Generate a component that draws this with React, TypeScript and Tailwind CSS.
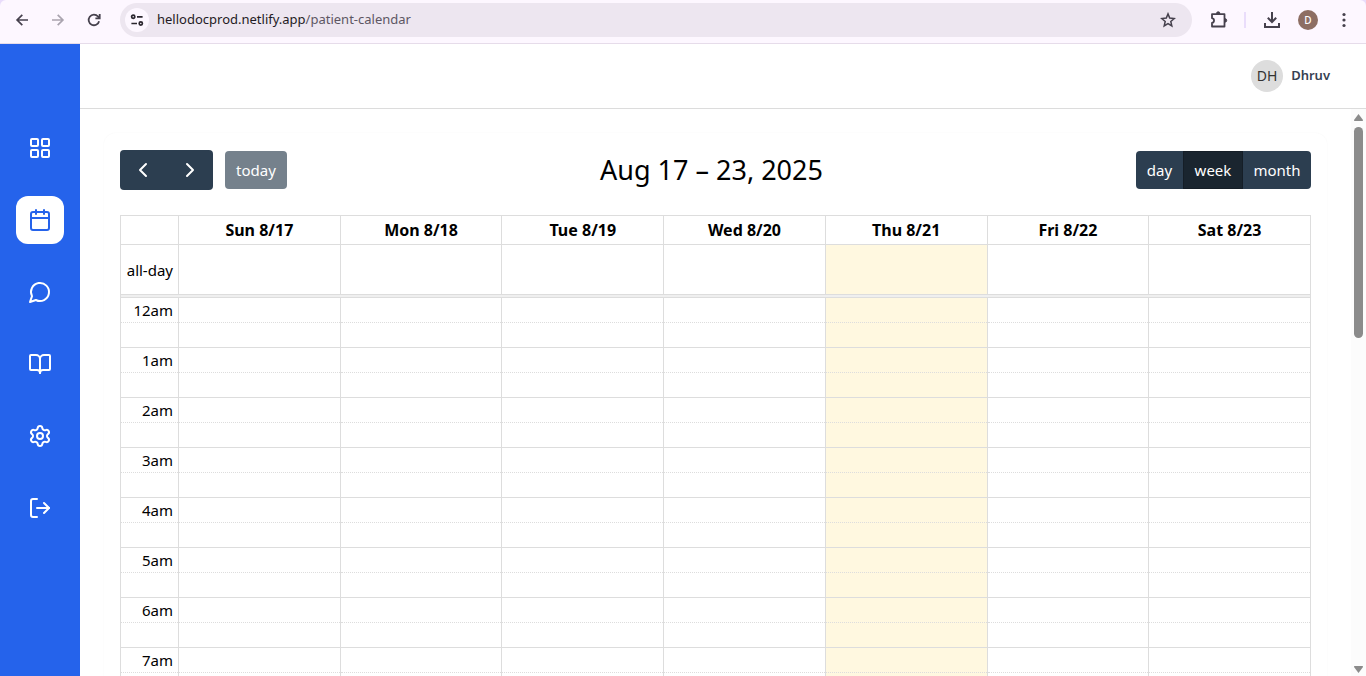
import { BookOpen, Calendar, ChevronLeft, ChevronRight, LayoutGrid, LogOut, Settings } from "lucide-react";
import type { ReactNode } from "react";

function MessageBubble() {
  return (
    <svg viewBox="0 0 24 24" className="size-6" fill="none" stroke="currentColor" strokeWidth="2" strokeLinecap="round" strokeLinejoin="round">
      <path d="M7.9 20A9 9 0 1 0 4 16.1L2 22Z" />
    </svg>
  );
}

const navItems: { label: string; icon: ReactNode; active?: boolean }[] = [
  { label: "Dashboard", icon: <LayoutGrid className="size-6" /> },
  { label: "Calendar", icon: <Calendar className="size-6" />, active: true },
  { label: "Messages", icon: <MessageBubble /> },
  { label: "Records", icon: <BookOpen className="size-6" /> },
  { label: "Settings", icon: <Settings className="size-6" /> },
  { label: "Log out", icon: <LogOut className="size-6" /> },
];

const days = ["Sun 8/17", "Mon 8/18", "Tue 8/19", "Wed 8/20", "Thu 8/21", "Fri 8/22", "Sat 8/23"];
const today = "Thu 8/21";
const hours = ["12am", "1am", "2am", "3am", "4am", "5am", "6am", "7am"];

function BrowserBar() {
  return (
    <div className="shrink-0 bg-[#e9dcfb]">
      <div className="flex h-11 items-start rounded-t-md border-b border-[#e6dcea] bg-[#fdf7ff] pt-[3px] text-[#46414d]">
        <div className="flex h-[34px] w-[120px] shrink-0 items-center gap-5 pl-3.5">
          <button aria-label="Back" className="size-4">
            <svg viewBox="0 0 16 16" className="size-4" fill="none" stroke="currentColor" strokeWidth="1.7">
              <path d="M14 8H3M8.3 2.8 3.1 8l5.2 5.2" />
            </svg>
          </button>
          <button aria-label="Forward" className="size-4 text-[#aaa4af]">
            <svg viewBox="0 0 16 16" className="size-4" fill="none" stroke="currentColor" strokeWidth="1.7">
              <path d="M2 8h11M7.7 2.8 12.9 8l-5.2 5.2" />
            </svg>
          </button>
          <button aria-label="Reload" className="size-4">
            <svg viewBox="0 0 16 16" className="size-4" fill="none" stroke="currentColor" strokeWidth="1.8">
              <path d="M13.1 9.2A5.3 5.3 0 1 1 12 4.5l1.4 1.4M13.7 2v4.3H9.4" />
            </svg>
          </button>
        </div>
        <div className="flex h-[34px] flex-1 items-center rounded-full bg-[#ede6f0] pr-4 pl-[5px]">
          <button aria-label="Site information" className="flex size-6 items-center justify-center rounded-full bg-[#fdf7ff]">
            <svg viewBox="0 0 14 14" className="size-3.5" fill="none" stroke="#2a262e" strokeWidth="1.7">
              <circle cx="3.2" cy="3.8" r="1.6" />
              <path d="M7 3.8h5.600M1.400 10.500H7" />
              <circle cx="10.800" cy="10.500" r="1.600" />
            </svg>
          </button>
          <p className="ml-2 flex-1 text-[13px] text-[#1f1b24]">
            hellodocprod.netlify.app<span className="text-[#5d5663]">/patient-calendar</span>
          </p>
          <button aria-label="Bookmark this page">
            <svg viewBox="0 0 16 16" className="size-4" fill="none" stroke="currentColor" strokeWidth="1.5">
              <path d="m8 1.900 1.700 4.200 4.500.4-3.400 3 1 4.400L8 11.600l-3.800 2.300 1-4.400-3.400-3 4.500-.4Z" />
            </svg>
          </button>
        </div>
        <div className="flex h-[34px] w-[174px] shrink-0 items-center pl-[18px]">
          <button aria-label="Extensions">
            <svg viewBox="0 0 18 18" className="size-[18px]" fill="none" stroke="currentColor" strokeWidth="1.8" strokeLinejoin="round">
              <path d="M2 3.200h12.500v12.300H2v-3.500c2.700-.5 2.700-4.300 0-4.800Z" />
              <path d="M6.500 2.500a1.700 1.700 0 0 1 3.400 0ZM15 7.700a1.700 1.700 0 0 1 0 3.400Z" fill="currentColor" strokeWidth="1" />
            </svg>
          </button>
          <span className="ml-4 h-4 w-0.5 bg-[#eaddfb]" />
          <button aria-label="Downloads" className="ml-[17px]">
            <svg viewBox="0 0 18 18" className="size-[18px]" fill="none" stroke="currentColor" strokeWidth="2">
              <path d="M9 1v9.500M4.800 6.800 9 11l4.200-4.200M2 12v4h14v-4" />
            </svg>
          </button>
          <button aria-label="Profile" className="ml-[17px] flex size-5 items-center justify-center rounded-full bg-[#8d6e63] text-[10px] font-medium text-white">
            D
          </button>
          <button aria-label="Menu" className="ml-[17px]">
            <svg viewBox="0 0 18 18" className="size-[18px]" fill="currentColor">
              <circle cx="9" cy="3.500" r="1.600" />
              <circle cx="9" cy="9" r="1.600" />
              <circle cx="9" cy="14.500" r="1.600" />
            </svg>
          </button>
        </div>
      </div>
    </div>
  );
}

function Sidebar() {
  return (
    <nav className="flex w-20 shrink-0 flex-col items-center gap-6 bg-[#2563eb] pt-20">
      {navItems.map((item) => (
        <a
          key={item.label}
          href="#"
          aria-label={item.label}
          className={
            item.active
              ? "flex size-12 items-center justify-center rounded-xl bg-white text-[#2563eb]"
              : "flex size-12 items-center justify-center rounded-xl text-white"
          }
        >
          {item.icon}
        </a>
      ))}
    </nav>
  );
}

function Toolbar() {
  return (
    <div className="mb-6 flex h-[42px] items-center justify-between text-[15px] text-white">
      <div className="flex items-center gap-3">
        <div className="flex h-10 overflow-hidden rounded bg-[#2c3e50]">
          <button aria-label="Previous week" className="flex w-[46px] items-center justify-center">
            <ChevronLeft className="size-6" />
          </button>
          <button aria-label="Next week" className="flex w-[47px] items-center justify-center">
            <ChevronRight className="size-6" />
          </button>
        </div>
        <button disabled className="h-[38px] w-[62px] rounded bg-[#2c3e50] opacity-65">
          today
        </button>
      </div>
      <h2 className="text-[27px] text-black">Aug 17 – 23, 2025</h2>
      <div className="flex h-[38px] overflow-hidden rounded bg-[#2c3e50]">
        <button className="w-[47px]">day</button>
        <button className="w-[60px] border border-[#151e27] bg-[#1a252f]">week</button>
        <button className="w-[68px]">month</button>
      </div>
    </div>
  );
}

function SlotCells({ border }: { border: string }) {
  return (
    <>
      {days.map((d) => (
        <td key={d} className={d === today ? `bg-[#fff8e0] ${border}` : border} />
      ))}
    </>
  );
}

function WeekTable() {
  const solid = "border border-[#dddddd] p-0";
  const dotted = "border border-[#dddddd] [border-top-style:dotted] p-0";
  return (
    <table className="w-full table-fixed border-collapse text-[15px] leading-5 text-black">
      <colgroup>
        <col className="w-[58px]" />
        {days.map((d) => (
          <col key={d} />
        ))}
      </colgroup>
      <thead>
        <tr className="h-[29px]">
          <td className={solid} />
          {days.map((d) => (
            <th key={d} scope="col" className={`text-base leading-5 font-bold ${solid}`}>
              {d}
            </th>
          ))}
        </tr>
      </thead>
      <tbody>
        <tr className="h-[50px]">
          <th scope="row" className={`text-right font-normal whitespace-nowrap ${solid}`}>
            <span className="pr-[5px]">all-day</span>
          </th>
          <SlotCells border={solid} />
        </tr>
        <tr className="h-[3px]">
          <td colSpan={8} className="border border-[#dddddd] bg-[#efefef] p-0" />
        </tr>
      </tbody>
      {hours.map((h) => (
        <tbody key={h}>
          <tr className="h-[25px]">
            <th scope="row" className="border border-[#dddddd] [border-bottom-style:dotted] p-0 text-right font-normal">
              <span className="pr-[5px]">{h}</span>
            </th>
            <SlotCells border="border border-[#dddddd] [border-bottom-style:dotted] p-0" />
          </tr>
          <tr className="h-[25px]">
            <td className={dotted} />
            <SlotCells border={dotted} />
          </tr>
        </tbody>
      ))}
    </table>
  );
}

function ScrollRail() {
  return (
    <div aria-hidden="true" className="flex w-[15px] shrink-0 flex-col items-center bg-[#fcfcfc] text-[#8b8b8b]">
      <svg viewBox="0 0 15 18" className="h-[18px] w-[15px] shrink-0" fill="currentColor">
        <path d="M7.500 5 12 11q.3 1-.8 1H3.800q-1.100 0-.8-1Z" />
      </svg>
      <div className="h-[211px] w-[9px] rounded-full bg-[#8b8b8b]" />
      <div className="flex-1" />
      <svg viewBox="0 0 15 14" className="h-3.5 w-[15px] shrink-0" fill="currentColor">
        <path d="M7.500 11 12 5q.3-1-.8-1H3.800q-1.100 0-.8 1Z" />
      </svg>
    </div>
  );
}

export default function App() {
  return (
    <div className="flex h-screen flex-col overflow-hidden bg-white font-['Noto_Sans',sans-serif]">
      <BrowserBar />
      <div className="flex min-h-0 flex-1">
        <Sidebar />
        <div className="flex min-w-0 flex-1 flex-col">
          <header className="flex h-[65px] shrink-0 items-center justify-end gap-2 border-b border-[#dcdcdc] pr-9 text-[13px]">
            <span className="flex size-8 items-center justify-center rounded-full bg-[#dddddd] text-sm text-[#333333]">DH</span>
            <span className="font-semibold text-[#374151]">Dhruv</span>
          </header>
          <div className="flex min-h-0 flex-1">
            <main className="min-w-0 flex-1 overflow-y-auto p-6 [scrollbar-width:none]">
              <section className="rounded-xl bg-white p-4 shadow-[0_0_2px_rgba(0,0,0,0.04)]">
                <Toolbar />
                <WeekTable />
              </section>
            </main>
            <ScrollRail />
          </div>
        </div>
      </div>
    </div>
  );
}
